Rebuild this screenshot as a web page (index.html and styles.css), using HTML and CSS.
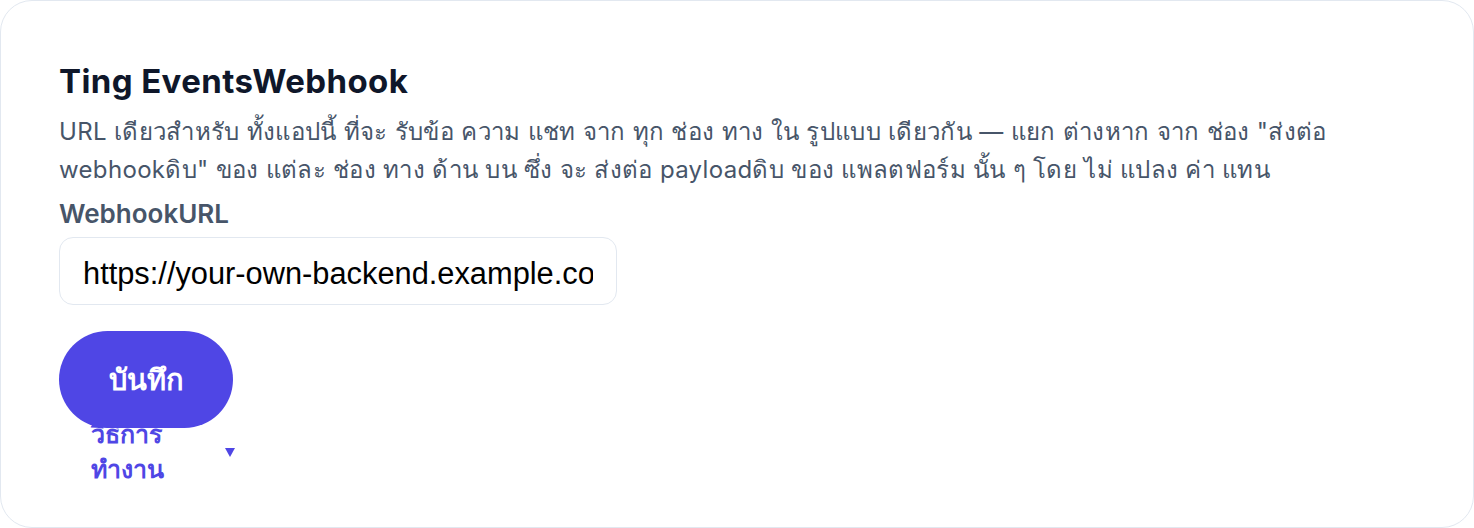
FILE: index.html
```html
<!DOCTYPE html>
<html lang="th">
<head>
    <meta charset="UTF-8">
    <meta name="viewport" content="width=device-width, initial-scale=1.0">
    <title>Ting Events Webhook</title>
    <link rel="stylesheet" href="styles.css">
</head>
<body>

    <div class="card">
        <h2 class="card-title">Ting EventsWebhook</h2>
        <p class="card-desc">URL เดียวสำหรับ ทั้งแอปนี้ ที่จะ รับข้อ ความ แชท จาก ทุก ช่อง ทาง ใน รูปแบบ เดียวกัน — แยก ต่างหาก จาก ช่อง "ส่งต่อ webhookดิบ" ของ แต่ละ ช่อง ทาง ด้าน บน ซึ่ง จะ ส่งต่อ payloadดิบ ของ แพลตฟอร์ม นั้น ๆ โดย ไม่ แปลง ค่า แทน</p>

        <label class="field-label" for="webhook-url">WebhookURL</label>
        <input type="text" id="webhook-url" class="field-input" value="https://your-own-backend.example.com/ting-events">

        <div class="actions">
            <button class="btn-save">บันทึก</button>
        </div>

        <details class="howto">
            <summary class="howto-toggle">
                <span class="howto-text">วิธีการ ทำงาน</span>
                <span class="howto-caret"></span>
            </summary>
        </details>
    </div>

</body>
</html>
```

FILE: styles.css
```css
html, body {
    margin: 0;
    padding: 0;
    background-color: #fff;
}

.card {
    box-sizing: border-box;
    height: 528px;
    border: 1px solid #e2e8f0;
    border-radius: 32px;
    padding: 60px 58px 0;
    font-family: Inter, "Noto Sans", sans-serif;
}

.card-title {
    margin: 0;
    font-size: 33px;
    font-weight: 700;
    letter-spacing: 0.4px;
    color: #0f172a;
    line-height: 40px;
}

.card-desc {
    margin: 12px 0 10px;
    font-size: 24px;
    letter-spacing: 0.33px;
    line-height: 38px;
    color: #475569;
}

.field-label {
    display: block;
    font-size: 26px;
    font-weight: 600;
    color: #475569;
    line-height: 30px;
    margin-bottom: 8px;
}

.field-input {
    box-sizing: border-box;
    display: block;
    width: 558px;
    height: 68px;
    padding: 6px 23px 0;
    border: 1px solid #e2e8f0;
    border-radius: 14px;
    font-family: "Liberation Sans", Arial, sans-serif;
    font-size: 30.8px;
    line-height: 29px;
    color: #000;
    outline: none;
}

.actions {
    margin-top: 26px;
}

.btn-save {
    position: relative;
    box-sizing: border-box;
    width: 174px;
    height: 97px;
    border: none;
    border-radius: 999px;
    background-color: #4f46e5;
    color: #fff;
    font-family: Inter, "Noto Sans", sans-serif;
    font-size: 29px;
    font-weight: 700;
    cursor: pointer;
}

.howto {
    margin-top: -11px;
}

.howto-toggle {
    display: flex;
    align-items: center;
    justify-content: space-between;
    box-sizing: border-box;
    width: 176px;
    padding-left: 32px;
    list-style: none;
    cursor: pointer;
    color: #4f46e5;
    font-size: 25px;
    font-weight: 700;
    line-height: 35px;
}

.howto-toggle::-webkit-details-marker {
    display: none;
}

.howto-text {
    max-width: 100px;
}

.howto-caret {
    width: 0;
    height: 0;
    border-left: 5px solid transparent;
    border-right: 5px solid transparent;
    border-top: 9px solid #4f46e5;
}
```
